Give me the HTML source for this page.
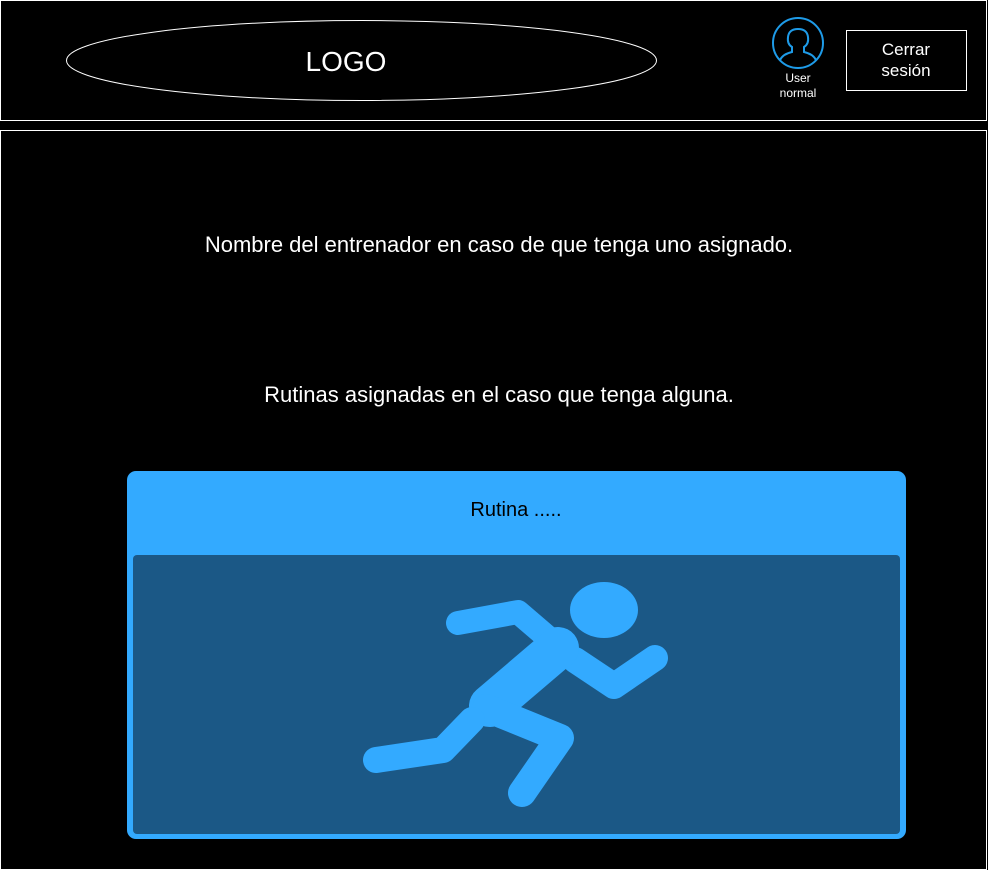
<!DOCTYPE html>
<html><head><style>
body{margin:0;width:988px;height:861px;background:#000;position:relative;overflow:hidden;font-family:"Liberation Sans",sans-serif;color:#fff}
.box{position:absolute;border:1px solid #fff;box-sizing:border-box}
</style></head><body>
<div class="box" style="left:0;top:0;width:987px;height:121px"></div>
<div class="box" style="left:0;top:130px;width:987px;height:740px"></div>
<svg style="position:absolute;left:0;top:0" width="988" height="861">
<ellipse cx="361.5" cy="60.5" rx="295" ry="40" fill="none" stroke="#fff" stroke-width="1"/>
<text x="346" y="71" font-size="28" fill="#fff" text-anchor="middle" font-family="Liberation Sans">LOGO</text>
<circle cx="798" cy="43" r="25" fill="none" stroke="#1e9be8" stroke-width="2"/>
<path d="M780 60 Q783 54 792 52 L792 47 Q787 44 788 37 Q789 29 798 29 Q807 29 808 37 Q809 44 804 47 L804 52 Q813 54 816 60" fill="none" stroke="#1e9be8" stroke-width="2"/>
<text x="798" y="82" font-size="12" fill="#fff" text-anchor="middle">User</text>
<text x="798" y="97" font-size="12" fill="#fff" text-anchor="middle">normal</text>
<rect x="846.5" y="30.5" width="120" height="60" fill="none" stroke="#fff"/>
<text x="906" y="55" font-size="17" fill="#fff" text-anchor="middle">Cerrar</text>
<text x="906" y="76" font-size="17" fill="#fff" text-anchor="middle">sesión</text>
<text x="499" y="252" font-size="22" fill="#fff" text-anchor="middle">Nombre del entrenador en caso de que tenga uno asignado.</text>
<text x="499" y="402" font-size="22" fill="#fff" text-anchor="middle">Rutinas asignadas en el caso que tenga alguna.</text>
<rect x="127" y="471" width="779" height="368" rx="9" fill="#33aaff"/>
<rect x="133" y="555" width="767" height="279" rx="4" fill="#1b5886"/>
<text x="516" y="516" font-size="20" fill="#000" text-anchor="middle">Rutina .....</text>
<g fill="none" stroke="#33aaff" stroke-linecap="round" stroke-linejoin="round">
<ellipse cx="604" cy="610" rx="34" ry="28" fill="#33aaff" stroke="none"/>
<polyline points="458,623 518,612 560,648" stroke-width="24"/>
<polyline points="575,660 614,686 655,658" stroke-width="26"/>
<line x1="558" y1="648" x2="490" y2="706" stroke-width="42"/>
<polyline points="486,708 560,738 522,793" stroke-width="28"/>
<polyline points="376,760 443,750 472,720" stroke-width="26"/>
</g>
</svg>
</body></html>
